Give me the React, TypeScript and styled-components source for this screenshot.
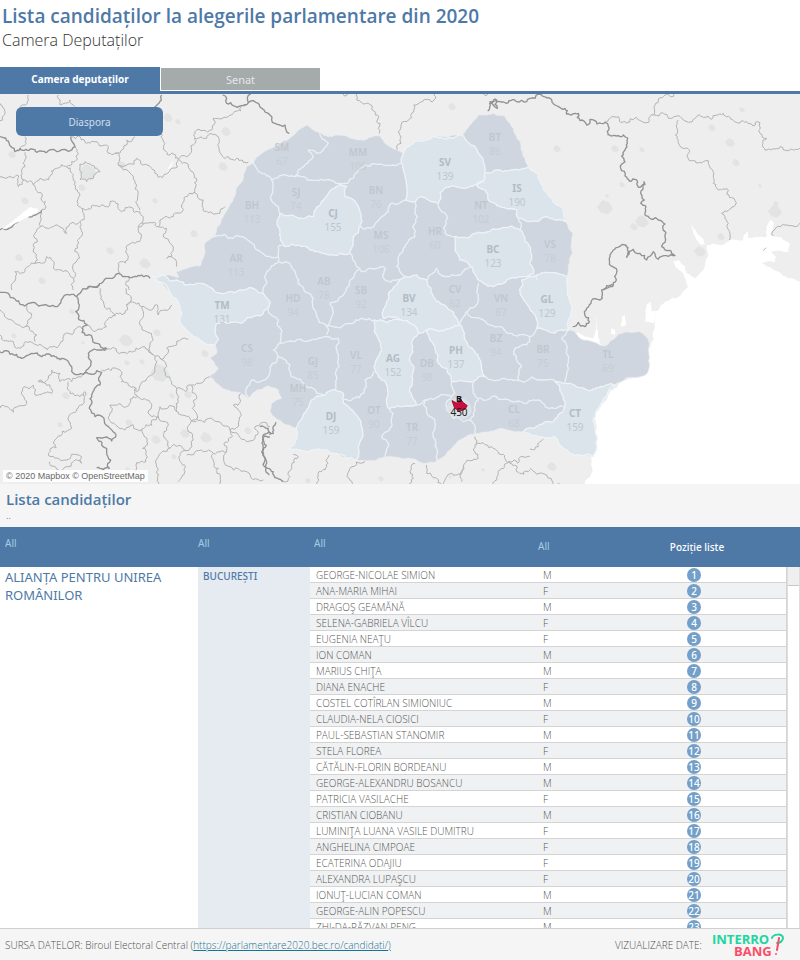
import React from "react";
import styled, { createGlobalStyle } from "styled-components";

const blue = "#4e79a7";
const face = '"Noto Sans", "Open Sans", sans-serif';
const light = '"Open Sans", "Noto Sans", sans-serif';

const GlobalStyle = createGlobalStyle`
  *, *::before, *::after { box-sizing: border-box; }
  body { margin: 0; background: #fff; font-family: ${face}; }
  button, select { font: inherit; border: 0; margin: 0; padding: 0; cursor: pointer; }
`;

const Page = styled.div`
  display: flex;
  flex-direction: column;
  height: 100vh;
  min-height: 720px;
`;

const Heading = styled.header`
  padding: 4px 2px 0;
  height: 67px;
`;

const Title = styled.h1`
  margin: 0;
  font: 600 19px/25px ${light};
  color: ${blue};
`;

const Subtitle = styled.p`
  margin: 0;
  font: 300 16px/22px ${light};
  color: #333;
`;

const Tabs = styled.nav`
  display: flex;
  align-items: stretch;
  height: 27px;
  border-bottom: 3px solid ${blue};
`;

const Tab = styled.button<{ $active?: boolean }>`
  width: 20%;
  border: solid #fff;
  border-width: ${(p) => (p.$active ? "0" : "1px 0 1px 1px")};
  background: ${(p) => (p.$active ? blue : "#a5abab")};
  color: ${(p) => (p.$active ? "#fff" : "#e3e7e7")};
  font-size: ${(p) => (p.$active ? "10px" : "11px")};
  font-weight: ${(p) => (p.$active ? 700 : 400)};
`;

const MapPanel = styled.section`
  position: relative;
  background: #eee;
  line-height: 0;
`;

const MapSvg = styled.svg`
  display: block;
  width: 100%;
  height: auto;
`;

const DiasporaButton = styled.button`
  position: absolute;
  top: 13px;
  left: 16px;
  width: 147px;
  height: 29px;
  border-radius: 6px;
  background: ${blue};
  color: #cfdfee;
  font-size: 10px;
  line-height: 16px;
`;

const Attribution = styled.small`
  position: absolute;
  left: 3px;
  bottom: 2px;
  padding: 0 3px;
  background: rgba(255, 255, 255, 0.85);
  color: #6a6a6a;
  font: 9px/12px "Liberation Sans", sans-serif;
`;

const ListHeading = styled.div`
  height: 43px;
  padding: 5px 6px 0;
  background: #f5f5f5;
`;

const ListTitle = styled.h2`
  margin: 0;
  font: 600 15px/20px ${light};
  color: ${blue};
`;

const Dots = styled.p`
  margin: 0;
  color: #888;
  font-size: 9px;
  line-height: 14px;
`;

const Filters = styled.div`
  display: grid;
  grid-template-columns: 193px 116px 224px 69px 1fr 13px;
  height: 40px;
  padding-left: 5px;
  background: ${blue};
  color: #fff;
  font-size: 10px;
`;

const Filter = styled.select<{ $low?: boolean }>`
  appearance: none;
  align-self: start;
  margin-top: ${(p) => (p.$low ? "11px" : "8px")};
  height: 16px;
  background: transparent;
  color: #a9c9e2;
  line-height: 16px;
  option { color: #333; }
`;

const PositionHeading = styled.span`
  align-self: center;
  text-align: center;
  font-weight: 500;
`;

const ListBody = styled.div`
  display: flex;
  flex: 1;
  min-height: 0;
  overflow: hidden;
`;

const Table = styled.table`
  flex: 1;
  align-self: flex-start;
  table-layout: fixed;
  border-collapse: separate;
  border-spacing: 0;
  td, th { padding: 0; text-align: left; font-weight: 400; }
`;

const Col = styled.col<{ $w?: number }>`
  width: ${(p) => (p.$w ? p.$w + "px" : "auto")};
`;

const Party = styled.th`
  vertical-align: top;
  && { padding: 1px 5px; }
  color: ${blue};
  font-size: 13px;
  line-height: 18px;
`;

const County = styled.th`
  vertical-align: top;
  background: #e6eaf1;
  && { padding: 1px 5px; font-weight: 500; }
  color: ${blue};
  font-size: 10px;
  line-height: 16px;
`;

const Row = styled.tr<{ $striped?: boolean }>`
  height: 16px;
  td {
    background: ${(p) => (p.$striped ? "#eff1f2" : "#fff")};
    border-bottom: 1px solid #d4d4d4;
    color: #585858;
    font: 300 10px/13px ${light};
    white-space: nowrap;
  }
`;

const NameCell = styled.td`
  && { padding: 2px 0 0 6px; }
`;

const SexCell = styled.td`
  && { padding: 2px 0 0 5px; }
`;

const PositionCell = styled.td`
  && { text-align: center; border-right: 1px solid #d4d4d4; }
`;

const Badge = styled.span`
  display: flex;
  justify-content: center;
  width: 14px;
  height: 14px;
  margin: 1px auto 0;
  border-radius: 50%;
  background: #739fc8;
  color: #fff;
  font: 500 10px/14px ${face};
`;

const ScrollTrack = styled.div`
  width: 13px;
  border-left: 1px solid #ddd;
  border-right: 1px solid #ddd;
`;

const ScrollThumb = styled.div`
  height: 19px;
  background: #efefef;
  border-bottom: 1px solid #c8c8c8;
`;

const Footer = styled.footer`
  display: flex;
  align-items: center;
  height: 32px;
  padding: 0 14px 0 5px;
  border-top: 1px solid #cfcfcf;
  background: #f5f5f5;
  color: #505050;
  font: 300 10px/14px ${light};
`;

const Source = styled.p`
  flex: 1;
  margin: 0;
`;

const SourceLink = styled.a`
  color: #1b7295;
  text-decoration: underline;
`;

const Logo = styled.svg`
  margin-left: 8px;
  width: 76px;
  height: 26px;
`;

/* ---------- map geometry ---------- */

type Pt = [number, number];

const parse = (s: string): Pt[] =>
  s.trim().split(/\s+/).map((p) => p.split(",").map(Number) as Pt);

const noise = (a: number, b: number) => {
  const v = Math.sin(a * 12.9898 + b * 78.233) * 43758.5453;
  return (v - Math.floor(v)) * 2 - 1;
};

/* Splits a segment by midpoint displacement; both directions give the same line. */
const split = (a: Pt, b: Pt, k: number): Pt[] => {
  const len = Math.hypot(b[0] - a[0], b[1] - a[1]);
  if (len < 9) return [b];
  const flip = a[0] > b[0] || (a[0] === b[0] && a[1] > b[1]);
  const [p, q] = flip ? [b, a] : [a, b];
  const d = noise(p[0] + q[0], p[1] + q[1] * 2) * k;
  const mid: Pt = [
    Math.round((p[0] + q[0]) / 2 - (q[1] - p[1]) * d),
    Math.round((p[1] + q[1]) / 2 + (q[0] - p[0]) * d),
  ];
  return [...split(a, mid, k), ...split(mid, b, k)];
};

const trace = (s: string, closed = false, k = 0.2) => {
  const pts = parse(s);
  if (closed) pts.push(pts[0]);
  let out = `M${pts[0]}`;
  for (let i = 1; i < pts.length; i++)
    out += split(pts[i - 1], pts[i], k).map((p) => `L${p}`).join("");
  return out + (closed ? "Z" : "");
};

const romania =
  "8,500 45,495 85,503 78,485 110,475 150,468 165,430 165,398 195,380 200,355 225,310 260,235 290,170 310,160 320,140 355,118 420,85 440,65 468,45 490,60 510,68 535,80 570,75 600,85 645,90 690,78 720,110 760,130 800,92 850,80 937,75 960,45 985,15 1030,10 1065,18 1090,55 1110,95 1125,145 1135,170 1165,195 1180,235 1205,265 1240,300 1248,335 1268,370 1268,430 1255,470 1250,500 1255,560 1262,620 1255,660 1275,665 1300,690 1365,708 1385,690 1430,665 1470,665 1495,690 1497,710 1492,790 1480,798 1430,803 1395,825 1370,860 1338,905 1335,960 1330,1040 1290,1035 1240,1015 1215,980 1170,980 1120,965 1050,955 975,972 930,990 900,1020 860,1055 820,1060 770,1045 720,1038 680,1050 620,1050 560,1030 500,1018 450,1020 418,1015 440,985 438,955 400,940 360,905 365,880 395,865 385,840 355,828 320,840 295,865 275,850 215,833 180,800 205,775 180,745 200,730 195,705 150,690 115,665 90,630 90,590 60,545";

const lightCounties = [
  "760,130 800,92 850,80 937,75 975,110 1000,150 1005,190 1000,215 960,230 885,235 870,250 865,280 835,270 815,260 795,275 765,270 765,200 755,160",
  "1005,190 1060,185 1110,180 1135,170 1165,195 1180,235 1205,265 1240,300 1248,335 1215,330 1190,320 1175,325 1140,335 1105,325 1100,300 1050,290 1015,270 1005,240 980,225 1000,215",
  "915,380 960,380 1000,370 1060,352 1110,360 1125,395 1145,435 1150,490 1110,500 1060,520 1000,520 980,500 965,470 930,450 915,420",
  "570,220 590,230 585,260 625,290 630,350 610,380 600,430 540,435 480,420 405,410 390,370 390,310 445,325 490,320 510,285 535,250",
  "8,500 45,495 95,515 130,525 170,525 225,550 280,540 340,550 360,580 340,610 290,625 275,640 240,638 200,640 195,665 205,690 195,705 150,690 115,665 90,630 90,590 60,545",
  "765,500 800,495 830,510 850,560 900,600 930,645 900,655 830,660 805,670 790,645 750,628 700,625 705,590 715,550 740,525",
  "675,630 750,628 790,645 805,670 785,700 780,740 785,800 800,885 755,890 715,895 712,830 685,800 672,770",
  "830,660 900,655 930,645 945,690 970,720 990,750 1005,800 970,815 905,815 890,775 865,760 855,710 840,690",
  "1115,510 1150,500 1250,500 1255,560 1262,620 1255,660 1215,670 1160,655 1150,610 1125,575",
  "1215,815 1250,820 1310,840 1360,830 1395,825 1370,860 1338,905 1335,960 1330,1040 1290,1035 1240,1015 1215,980 1170,980 1120,965 1160,950 1210,935 1230,910 1245,890 1235,850",
  "525,855 555,840 580,850 580,880 615,910 635,950 625,1010 620,1050 560,1030 500,1018 450,1020 418,1015 440,985 438,955 470,900 485,870",
];

const countyLines = [
  "510,68 535,100 520,120 475,120 490,140 465,165 445,180 435,200",
  "310,160 335,190 365,210 435,200 460,200 520,210 570,220",
  "365,210 370,230 362,265 385,290 390,310",
  "570,220 610,205 645,165 700,165 755,160",
  "625,350 660,355 695,320 725,280 765,270",
  "795,275 802,320 795,380 745,440 740,470 765,500",
  "600,430 620,470 680,475 705,475 705,510 740,510 765,500",
  "195,380 250,385 300,395 345,435 385,440 385,410 405,410",
  "385,440 385,455 350,485 350,520 340,550",
  "385,455 420,460 440,500 490,565 500,615 530,650 530,675",
  "360,580 355,600 385,630 390,700 440,690 530,680 565,685",
  "630,475 600,510 580,555 540,580 545,620 530,650",
  "530,650 600,640 675,630",
  "565,685 565,740 560,800 555,840",
  "390,700 370,720 385,740 360,770 355,800 330,815 305,810 295,865",
  "385,740 420,765 425,800 470,830 500,850 525,855",
  "580,868 610,865 640,850 645,810 672,785",
  "715,895 730,910 725,950 695,980 715,1010 705,1040",
  "800,885 825,870 830,905 855,930 850,980 860,1055",
  "825,870 840,865 905,862",
  "905,815 915,850 895,870 890,900 910,925 940,935 960,930",
  "970,815 970,850 985,870 975,900 960,930 975,950 975,972",
  "985,865 1040,860 1080,872 1150,870 1200,895 1245,890",
  "1005,800 1060,805 1110,812 1180,810 1215,815",
  "1160,655 1140,680 1130,705 1095,715 1100,750 1115,770 1105,812",
  "1255,660 1235,685 1250,720 1255,780 1245,820",
  "950,605 1000,630 1060,655 1090,675 1140,680",
  "930,645 950,605 975,590 980,545 985,520",
  "830,510 860,475 885,500 930,495 965,470",
  "865,280 885,310 885,370 915,380",
  "1105,325 1110,360",
  "1150,490 1160,510",
];

interface Layer {
  at: string;
  strong: string[];
  soft: string[];
}

/* Neighbouring borders, grouped by map tile; one unit is a third of a map unit. */
const tiles: Layer[] = [
  {
    at: "translate(0 90)",
    strong: [
      "0,140 45,185 110,187 180,182 225,170 212,140",
      "668,15 680,40 700,47 745,38 752,12",
      "745,38 775,40 800,68 810,75 825,100 855,105 868,130",
      "262,595 290,590 330,565 355,550 385,560 425,555 450,565",
      "485,15 465,50 455,62",
      "0,420 40,405 85,380 125,360",
    ],
    soft: [
      "0,40 12,55 8,90 0,92",
      "85,15 72,45 60,60",
      "175,15 180,45 210,30 225,50",
      "75,140 50,180",
      "75,187 75,230 72,270 100,285",
      "0,260 50,255 55,290 72,270",
      "225,170 235,190 215,215 200,230 170,235 150,260 120,265 100,285 125,310 125,360 122,410",
      "212,140 240,140 270,160 320,165 325,190 345,190 380,150 405,140",
      "200,230 220,265 232,300 235,340 245,355 240,395",
      "122,410 160,410 200,430 240,395 248,430 235,460 232,510 220,565",
      "122,410 105,430 100,480 105,520",
      "105,520 140,500 160,535 190,545 220,565 220,600",
      "105,520 75,540 45,545 35,600",
      "240,222 270,222 300,245 280,265 260,275 240,268 240,222",
      "345,190 355,225 370,240 405,280 415,310 420,360",
      "245,355 280,345 300,350 330,335 365,365 420,365 430,400 415,415",
      "355,225 410,205 430,225 455,235 475,262 510,240 535,208",
      "485,130 490,170 510,195 535,208 560,200 585,160 585,125",
      "585,125 635,120 640,85 690,75 745,38",
      "585,145 620,145 655,140 658,185 685,200 710,205 745,215",
      "535,208 565,225 570,310 545,345 520,380 480,390 475,410",
      "570,310 610,330 610,355 640,372 660,370 675,350",
      "415,410 475,410 500,415 500,505 528,510 530,530",
      "415,415 405,460 378,470 385,500 355,520 360,550",
      "385,560 388,600",
    ],
  },
  {
    at: "translate(260 90)",
    strong: ["683,63 710,30 712,55 700,45 690,35 720,35 740,40 770,35 800,35 810,25"],
    soft: [
      "290,12 290,30 320,40 345,65 350,95 360,100 358,130",
      "522,10 522,30 485,35 455,70 445,90 415,125 423,160 412,188",
      "250,12 258,18 265,12",
      "670,12 678,18 685,12",
    ],
  },
  {
    at: "translate(530 90)",
    strong: [
      "0,25 25,12 60,25 75,45 105,55 110,72 145,70 150,92 170,105 180,88 225,97 232,125 260,138 280,135 292,160 285,180 285,215 272,235 285,258 320,270 325,292 342,275 343,330 332,340 348,350 345,375 385,390 405,402 405,440 395,470 435,497 385,508 370,485 350,510 330,490 310,478 290,502 288,465 250,480 243,490 248,530 260,548 248,590 218,600",
    ],
    soft: [
      "225,97 240,85 265,80 290,100 350,98 360,80 372,75 400,70 415,85 460,90 520,82 545,88 580,70 610,92 650,95 690,98 690,130 710,145 705,180 750,170 775,182 810,175",
      "372,75 375,45 405,15 435,10",
      "445,90 460,175 478,180 478,212 520,215 535,212 548,240 550,280 575,300 595,300 598,322 612,325 612,350 575,370 595,400 598,450",
      "730,438 765,405 790,408 810,400",
      "700,482 708,474",
    ],
  },
  {
    at: "translate(0 285)",
    strong: [
      "0,22 25,25 45,42 85,55 110,58 165,65 190,35 210,30 230,35",
      "265,10 240,25 230,35 238,60 235,100 262,120 248,130 255,150 290,175 320,190 290,195 265,205 270,245 250,268",
      "0,200 30,208 65,220 95,205 125,215 165,215 200,225 210,240 220,265 250,268 290,257 305,262 300,300 275,330 268,370 285,395 325,425 348,450 335,468 290,458 320,490 332,525 328,550 290,548",
      "262,10 300,0",
      "810,455 790,458 785,500 800,530 808,570",
    ],
    soft: [
      "0,75 20,100 75,125 95,95 80,70 85,55",
      "0,150 40,170 50,190 90,170 110,180 175,185 190,155 235,125 250,135",
      "75,125 110,150 105,170",
      "300,10 310,50 330,70 345,92 320,125 290,135 262,120",
      "345,92 375,85 380,60 425,65 430,95 420,120 440,140 455,170 460,210",
      "378,60 378,10",
      "425,65 465,60 475,90 495,75 515,60",
      "320,195 400,200 445,195 460,210 480,220 500,190 530,180 565,162",
      "0,370 40,382 80,355 72,305 100,300 105,330 155,325 150,300 115,290 145,280 155,255 180,265 180,290 215,290 250,268",
      "205,290 210,325 240,335 255,320 245,360 215,385 215,430 170,460 145,505 165,520 200,525 215,508 245,515 245,535 200,545 150,530",
      "305,255 360,255 365,290 400,305 410,320 440,280 465,245 465,215",
      "400,305 412,335 440,345 450,390 475,395",
      "330,360 380,365 412,335",
      "330,360 325,400 375,435 425,432 475,395 480,365 530,380 590,410",
      "480,220 500,245 515,290 530,310 575,300 630,275",
      "575,300 590,340 592,400 570,490 560,497",
      "530,310 535,350 530,380",
      "475,395 500,435 510,490 560,497 555,560 535,590",
      "425,432 428,490 438,530 400,560",
      "510,490 475,515 470,560 480,600",
      "590,400 640,405 690,435 715,425 720,380 700,360 725,325",
      "690,435 680,500 640,505 610,500 560,510",
      "680,500 690,545 740,560 790,585",
      "640,505 655,550 650,600",
      "690,435 740,470 765,460 765,425 810,425",
    ],
  },
  {
    at: "translate(260 285)",
    strong: ["48,412 40,445 10,460 8,500 40,560 70,590", "0,425 25,430 30,450"],
    soft: [
      "100,508 115,515 95,550 70,590",
      "208,510 200,545 175,570 170,600",
      "315,530 270,550 268,580 280,600",
      "465,535 450,560 460,580 445,600",
      "500,540 500,565 530,580 545,600",
      "645,455 648,480 700,490 748,530 720,555 700,600",
      "645,480 655,520 610,545 605,590",
      "748,530 790,515 810,515",
      "748,530 770,560 810,555",
      "610,545 560,575 550,600",
    ],
  },
  {
    at: "translate(530 285)",
    strong: ["250,0 215,15 210,45 170,70 178,110 165,125 145,112 128,125"],
    soft: ["0,492 25,485 40,462", "0,550 20,568 50,570 68,592 90,597"],
  },
];

const sea =
  "530,465 600,450 640,452 650,423 655,445 710,440 720,390 730,395 720,435 780,460 775,485 720,485 738,500 735,515 695,520 745,545 815,575 1000,620 1000,1400 165,1400 165,1175 188,1145 183,1100 195,1045 200,1005 190,975 240,905 275,875 320,863 350,855 358,785 370,750 375,710 385,660 405,635 440,625 475,590 500,560 525,530";

const lagoons = [
  "483,395 495,420 525,462 515,465 490,430",
  "428,512 445,510 465,530 470,550 495,565 490,600 470,585 455,545 440,535",
  "140,725 165,740 195,750 215,765 190,768 155,755",
  "188,670 200,700 207,765 192,765",
  "275,680 285,675 288,705 275,710",
  "245,715 255,720 255,735 242,732",
  "350,645 362,635 365,665 390,660 370,700 345,695",
];

const towns: [number, number, number][] = [
  [88, 173, 9], [122, 165, 4], [82, 188, 4], [168, 118, 5], [226, 132, 5], [223, 167, 5], [12, 155, 4], [25, 201, 4],
  [50, 130, 4], [194, 234, 4], [145, 264, 6], [110, 251, 4], [19, 258, 4], [42, 281, 4], [178, 122, 3], [155, 201, 3],
  [126, 341, 7], [157, 333, 4], [72, 312, 3], [127, 363, 3], [160, 374, 10], [142, 362, 3], [205, 354, 4], [188, 395, 4],
  [185, 434, 5], [206, 438, 6], [156, 440, 5], [172, 396, 3], [129, 423, 4], [174, 457, 3], [248, 431, 4], [128, 470, 3],
  [66, 396, 4], [14, 336, 3], [83, 343, 2], [60, 425, 3], [452, 107, 4], [557, 149, 4], [615, 149, 4], [642, 150, 3],
  [605, 208, 8], [622, 185, 3], [642, 222, 7], [634, 227, 4], [607, 196, 2], [712, 128, 4], [730, 143, 5], [736, 163, 4],
  [775, 212, 7], [760, 186, 2], [700, 252, 6], [721, 237, 4], [552, 467, 5], [381, 479, 3], [308, 481, 3], [483, 470, 2],
  [450, 477, 2], [776, 204, 3], [742, 110, 3],
];

const labels: [string, string, number, number, boolean?][] = [
  ["SM", "67", 282, 150], ["MM", "106", 358, 155], ["BT", "86", 495, 140], ["SV", "139", 445, 165, true],
  ["IS", "190", 517, 191, true], ["SJ", "74", 296, 195], ["BN", "76", 376, 193], ["CJ", "155", 333, 216, true],
  ["BH", "113", 252, 208], ["NT", "102", 481, 208], ["MS", "106", 381, 238], ["HR", "60", 435, 234],
  ["BC", "123", 493, 252, true], ["VS", "78", 550, 247], ["AR", "113", 236, 261], ["AB", "78", 324, 284],
  ["SB", "92", 361, 293], ["BV", "134", 409, 301, true], ["CV", "62", 455, 292], ["VN", "87", 501, 301],
  ["GL", "129", 547, 302, true], ["TM", "131", 222, 308, true], ["HD", "94", 293, 301], ["CS", "98", 247, 351],
  ["GJ", "85", 313, 364], ["VL", "77", 356, 358], ["AG", "152", 393, 361, true], ["DB", "98", 427, 366],
  ["PH", "137", 456, 353, true], ["BZ", "94", 496, 341], ["BR", "75", 543, 352], ["TL", "69", 608, 357],
  ["MH", "75", 298, 391], ["DJ", "159", 331, 419, true], ["OT", "90", 374, 413], ["TR", "77", 412, 430],
  ["CL", "68", 514, 412], ["CT", "159", 575, 416, true],
];

const ElectionMap = () => (
  <MapSvg viewBox="0 94 800 390" role="img" aria-label="Harta județelor">
    <rect x="0" y="94" width="800" height="390" fill="#eee" />
    <g fill="#e2e3e3">
      {towns.map(([x, y, r], i) => (
        <path
          key={i}
          transform={`translate(${x} ${y})`}
          d={`M${-r},-1 L${-r / 3},${-r} L${r / 2},${-r * 0.7} L${r},1 L${r / 3},${r * 0.8} L${-r / 2},${r * 0.6}Z`}
        />
      ))}
    </g>
    {tiles.map((t) => (
      <g key={t.at} transform={`${t.at} scale(.3333)`} fill="none" strokeLinejoin="round">
        {t.soft.map((d) => <path key={d} d={trace(d, false, 0.32)} stroke="#b2b2b2" strokeWidth="3" />)}
        {t.strong.map((d) => <path key={d} d={trace(d, false, 0.28)} stroke="#929292" strokeWidth="4" />)}
      </g>
    ))}
    <g transform="translate(530 90) scale(.3333)" fill="#fff">
      <path d={trace(sea, true, 0.12)} />
      {lagoons.map((d) => <path key={d} d={trace(d, true, 0.12)} />)}
      <path d="M700 482l8 -9" stroke="#b2b2b2" strokeWidth="3" />
    </g>
    <g fill="#fff">
      <path d="M0 231L30 207 38 209 38 212 0 231Z" />
      <path d="M167 170L174 159 171 167Z" />
    </g>
    <g transform="translate(150 110) scale(.3333)" strokeLinejoin="round">
      <path d={trace(romania, true, 0.1)} fill="#cfd6df" stroke="#e8ecef" strokeWidth="2" />
      {lightCounties.map((d) => (
        <path key={d} d={trace(d, true, 0.16)} fill="#dae4ea" stroke="#eef3f6" strokeWidth="4" />
      ))}
      {countyLines.map((d) => (
        <path key={d} d={trace(d, false, 0.2)} fill="none" stroke="#eaeff4" strokeWidth="4" />
      ))}
      <path d="M890 900Q890 868 925 862Q965 868 965 905Q955 932 925 928Z" fill="#dce2e8" />
      <path d="M906 872L922 880 930 866 940 878 952 887 945 898 928 904 914 894Z" fill="#c80f43" stroke="#9a1436" strokeWidth="3" />
    </g>
    <g textAnchor="middle" fontFamily="Noto Sans">
      {labels.map(([code, count, x, y, isLight]) => (
        <g key={code} fill={isLight ? "#b2bcc3" : "#c0c6ce"}>
          <text x={x} y={y + 1} fontSize="10" fontWeight={isLight ? 700 : 600}>{code}</text>
          <text x={x} y={y + 15} fontSize="10" opacity={isLight ? 0.7 : 0.5}>{count}</text>
        </g>
      ))}
      <text x="459" y="402" fontSize="9" fontWeight="700" fill="#111">B</text>
      <text x="459" y="416" fontSize="10" fill="#222">450</text>
    </g>
  </MapSvg>
);

const candidates: [string, "M" | "F"][] = [
  ["GEORGE-NICOLAE SIMION", "M"],
  ["ANA-MARIA MIHAI", "F"],
  ["DRAGOŞ GEAMĂNĂ", "M"],
  ["SELENA-GABRIELA VÎLCU", "F"],
  ["EUGENIA NEAŢU", "F"],
  ["ION COMAN", "M"],
  ["MARIUS CHIŢA", "M"],
  ["DIANA ENACHE", "F"],
  ["COSTEL COTÎRLAN SIMIONIUC", "M"],
  ["CLAUDIA-NELA CIOSICI", "F"],
  ["PAUL-SEBASTIAN STANOMIR", "M"],
  ["STELA FLOREA", "F"],
  ["CĂTĂLIN-FLORIN BORDEANU", "M"],
  ["GEORGE-ALEXANDRU BOSANCU", "M"],
  ["PATRICIA VASILACHE", "F"],
  ["CRISTIAN CIOBANU", "M"],
  ["LUMINIŢA LUANA VASILE DUMITRU", "F"],
  ["ANGHELINA CIMPOAE", "F"],
  ["ECATERINA ODAJIU", "F"],
  ["ALEXANDRA LUPAŞCU", "F"],
  ["IONUŢ-LUCIAN COMAN", "M"],
  ["GEORGE-ALIN POPESCU", "M"],
  ["ZHI-DA-RĂZVAN PENG", "M"],
];

const AllFilter = ({ label, low }: { label: string; low?: boolean }) => (
  <Filter aria-label={label} $low={low}>
    <option>All</option>
  </Filter>
);

export default function App() {
  return (
    <Page>
      <GlobalStyle />
      <Heading>
        <Title>Lista candidaților la alegerile parlamentare din 2020</Title>
        <Subtitle>Camera Deputaților</Subtitle>
      </Heading>
      <Tabs>
        <Tab $active>Camera deputaților</Tab>
        <Tab>Senat</Tab>
      </Tabs>
      <MapPanel>
        <ElectionMap />
        <DiasporaButton>Diaspora</DiasporaButton>
        <Attribution>© 2020 Mapbox © OpenStreetMap</Attribution>
      </MapPanel>
      <ListHeading>
        <ListTitle>Lista candidaților</ListTitle>
        <Dots>..</Dots>
      </ListHeading>
      <Filters>
        <AllFilter label="Partid" />
        <AllFilter label="Județ" />
        <AllFilter label="Candidat" />
        <AllFilter label="Sex" low />
        <PositionHeading>Poziție liste</PositionHeading>
      </Filters>
      <ListBody>
        <Table>
          <colgroup>
            <Col $w={198} />
            <Col $w={112} />
            <Col $w={228} />
            <Col $w={64} />
            <Col />
          </colgroup>
          <tbody>
            {candidates.map(([name, sex], i) => (
              <Row key={name} $striped={i % 2 === 1}>
                {i === 0 && (
                  <>
                    <Party scope="rowgroup" rowSpan={candidates.length}>ALIANȚA PENTRU UNIREA ROMÂNILOR</Party>
                    <County scope="rowgroup" rowSpan={candidates.length}>BUCUREȘTI</County>
                  </>
                )}
                <NameCell>{name}</NameCell>
                <SexCell>{sex}</SexCell>
                <PositionCell><Badge>{i + 1}</Badge></PositionCell>
              </Row>
            ))}
          </tbody>
        </Table>
        <ScrollTrack><ScrollThumb /></ScrollTrack>
      </ListBody>
      <Footer>
        <Source>
          SURSA DATELOR: Biroul Electoral Central (
          <SourceLink href="https://parlamentare2020.bec.ro/candidati/">https://parlamentare2020.bec.ro/candidati/)</SourceLink>
        </Source>
        <span>VIZUALIZARE DATE:</span>
        <Logo viewBox="0 0 76 26" role="img" aria-label="Interrobang">
          <g fontFamily="Open Sans" fontWeight="700" fontSize="13">
            <text x="2" y="12" fill="#20d69f">INTERRO</text>
            <text x="24" y="24" fill="#fb4d66">BANG</text>
          </g>
          <path d="M62 6C63 2 73 1 73 6C73 9 70 11 67 11" fill="none" stroke="#20d69f" strokeWidth="2" strokeLinecap="round" />
          <path d="M69 6L67 18" fill="none" stroke="#fb4d66" strokeWidth="2" strokeLinecap="round" />
          <circle cx="66" cy="22" r="1" fill="#fb4d66" />
        </Logo>
      </Footer>
    </Page>
  );
}
